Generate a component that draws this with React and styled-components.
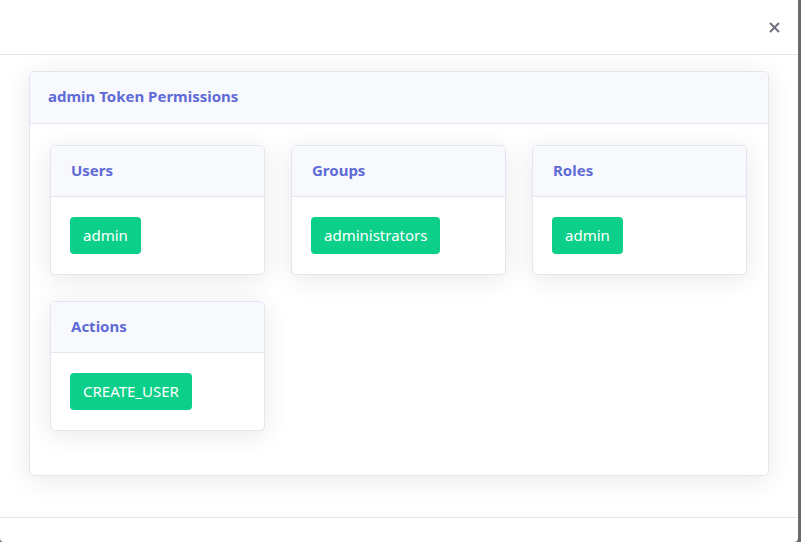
import React from "react";
import styled, { createGlobalStyle } from "styled-components";

const GlobalStyle = createGlobalStyle`
  html, body {
    margin: 0;
    padding: 0;
    background: #6b6b6e;
    font-family: "Noto Sans", "Open Sans", sans-serif;
  }
  * { box-sizing: border-box; }
`;

const Modal = styled.div`
  width: 798px;
  height: 542px;
  background: #fff;
  border-radius: 0 0 4px 4px;
  display: flex;
  flex-direction: column;
  overflow: hidden;
`;

const ModalHeader = styled.div`
  height: 55px;
  flex-shrink: 0;
  border-bottom: 1px solid #e3e6f0;
  display: flex;
  justify-content: flex-end;
  align-items: center;
  padding-right: 16px;
`;

const CloseButton = styled.button`
  border: none;
  background: none;
  padding: 0;
  width: 16px;
  height: 16px;
  cursor: pointer;
  display: flex;
  align-items: center;
  justify-content: center;
`;

const ModalBody = styled.div`
  flex: 1;
  padding: 16px 29px 17px 29px;
`;

const ModalFooter = styled.div`
  height: 25px;
  flex-shrink: 0;
  border-top: 1px solid #e3e6f0;
`;

const Card = styled.div`
  background: #fff;
  border: 1px solid #e3e6f0;
  border-radius: 5px;
  box-shadow: 0 4px 24px 0 rgba(58, 59, 69, 0.11);
  overflow: hidden;
  margin-bottom: ${(p) => (p.$outer ? "24px" : "0")};
`;

const CardHeader = styled.div`
  height: ${(p) => (p.$outer ? "52px" : "51px")};
  background: #f8f9fc;
  border-bottom: 1px solid #e3e6f0;
  display: flex;
  align-items: center;
  padding: 0 ${(p) => (p.$outer ? "18px" : "20px")} 3px;
  color: #5f6bd6;
  font-weight: 700;
  font-size: 15px;
`;

const CardBody = styled.div`
  padding: ${(p) => (p.$outer ? "21px 20px 44px 20px" : "20px 19px 20px 19px")};
`;

const Grid = styled.div`
  display: grid;
  grid-template-columns: repeat(3, 215px);
  column-gap: 26px;
  row-gap: 26px;
`;

const Tag = styled.span`
  display: inline-flex;
  align-items: center;
  height: 37px;
  padding: 0 13px 2px;
  background: #0ccf89;
  color: #fff;
  border-radius: 4px;
  font-size: 15px;
`;

const sections = [
  { title: "Users", items: ["admin"] },
  { title: "Groups", items: ["administrators"] },
  { title: "Roles", items: ["admin"] },
  { title: "Actions", items: ["CREATE_USER"] },
];

export default function App() {
  return (
    <>
      <GlobalStyle />
      <Modal>
        <ModalHeader>
          <CloseButton aria-label="Close">
            <svg width="11" height="11" viewBox="0 0 11 11">
              <path d="M1 1L10 10M10 1L1 10" stroke="#6e707e" strokeWidth="2" />
            </svg>
          </CloseButton>
        </ModalHeader>
        <ModalBody>
          <Card $outer>
            <CardHeader $outer>admin Token Permissions</CardHeader>
            <CardBody $outer>
              <Grid>
                {sections.map((s) => (
                  <Card key={s.title}>
                    <CardHeader>{s.title}</CardHeader>
                    <CardBody>
                      {s.items.map((it) => (
                        <Tag key={it}>{it}</Tag>
                      ))}
                    </CardBody>
                  </Card>
                ))}
              </Grid>
            </CardBody>
          </Card>
        </ModalBody>
        <ModalFooter />
      </Modal>
    </>
  );
}
